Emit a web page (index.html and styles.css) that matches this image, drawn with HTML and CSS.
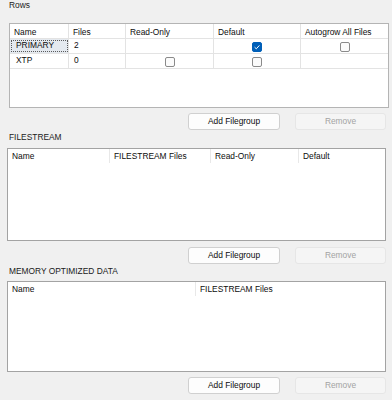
FILE: index.html
```html
<!DOCTYPE html>
<html lang="en">
<head>
  <meta charset="UTF-8">
  <title>Filegroups</title>
  <link rel="stylesheet" href="styles.css">
</head>
<body>
  <div class="page">
    <div class="group-label">Rows</div>
    <div class="rows-grid">
      <div class="grid-row head">
        <div class="cell">Name</div>
        <div class="cell">Files</div>
        <div class="cell">Read-Only</div>
        <div class="cell">Default</div>
        <div class="cell">Autogrow All Files</div>
      </div>
      <div class="grid-row">
        <div class="cell name focused">PRIMARY</div>
        <div class="cell">2</div>
        <div class="cell"></div>
        <div class="cell check"><span class="box checked"><svg viewBox="0 0 10 10" width="10" height="10"><path d="M2.6 5.2 L4.3 6.8 L7.4 3.4" fill="none" stroke="#fff" stroke-width="1"/></svg></span></div>
        <div class="cell check"><span class="box"></span></div>
      </div>
      <div class="grid-row">
        <div class="cell name">XTP</div>
        <div class="cell">0</div>
        <div class="cell check"><span class="box"></span></div>
        <div class="cell check"><span class="box"></span></div>
        <div class="cell"></div>
      </div>
    </div>
    <div class="buttons">
      <button class="btn">Add Filegroup</button>
      <button class="btn" disabled>Remove</button>
    </div>

    <div class="group-label">FILESTREAM</div>
    <div class="list-box">
      <div class="list-head fs-head">
        <div class="col">Name</div>
        <div class="col">FILESTREAM Files</div>
        <div class="col">Read-Only</div>
        <div class="col">Default</div>
      </div>
    </div>
    <div class="buttons">
      <button class="btn">Add Filegroup</button>
      <button class="btn" disabled>Remove</button>
    </div>

    <div class="group-label">MEMORY OPTIMIZED DATA</div>
    <div class="list-box mem">
      <div class="list-head mem-head">
        <div class="col">Name</div>
        <div class="col">FILESTREAM Files</div>
      </div>
    </div>
    <div class="buttons">
      <button class="btn">Add Filegroup</button>
      <button class="btn" disabled>Remove</button>
    </div>
  </div>
</body>
</html>
```

FILE: styles.css
```css
body {
  margin: 0;
  background-color: #f0f0f0;
  color: #0c0c0c;
  font-family: "Liberation Sans", Arial, sans-serif;
  font-size: 8.4px;
  overflow: hidden;
}

.page {
  display: flex;
  flex-direction: column;
}

.group-label {
  line-height: 11px;
  padding-left: 9px;
  color: #1a1a1a;
}

.group-label + .rows-grid {
  margin-top: 12px;
}

.rows-grid {
  margin-left: 9px;
  width: 380px;
  height: 85px;
  box-sizing: border-box;
  border: 1px solid #b4b4b4;
  background-color: #fff;
}

.grid-row {
  display: grid;
  grid-template-columns: 59px 57px 88px 87px 1fr;
  height: 15px;
  box-sizing: border-box;
  border-bottom: 1px solid #e3e3e3;
}

.cell {
  border-right: 1px solid #e3e3e3;
  line-height: 11px;
  padding: 1px 0 0 5px;
  white-space: nowrap;
}

.cell:last-child {
  border-right: none;
}

.grid-row.head .cell {
  padding: 3px 0 0 4px;
}

.cell.name {
  padding-left: 6px;
}

.cell.focused {
  background-color: #e4e9ef;
  outline: 1px dotted #5a5a5a;
  outline-offset: -2px;
}

.cell.check {
  display: flex;
  justify-content: center;
  align-items: center;
  padding: 1px 0 0 0;
}

.box {
  display: block;
  width: 10px;
  height: 10px;
  box-sizing: border-box;
  border: 1px solid #8a8a8a;
  border-radius: 2px;
  background-color: #fbfbfb;
}

.box.checked {
  border-color: #005fb8;
  background-color: #005fb8;
}

.box svg {
  display: block;
  margin: -1px;
}

.buttons {
  display: flex;
  gap: 15px;
  padding-left: 188px;
  margin-top: 5px;
}

.btn {
  width: 92px;
  height: 17px;
  padding: 0;
  border: 1px solid #d0d0d0;
  border-radius: 3px;
  background-color: #fdfdfd;
  color: #0c0c0c;
  font-family: inherit;
  font-size: 8.4px;
  line-height: 15px;
}

.btn:disabled {
  width: 91px;
  border-color: #e6e6e6;
  background-color: #f5f5f5;
  color: #a3a3a3;
}

.buttons + .group-label {
  margin-top: 2px;
}

.list-box {
  margin: 5px 0 0 7px;
  width: 379px;
  height: 93px;
  box-sizing: border-box;
  border: 1px solid #a3a3a3;
  background-color: #fff;
}

.list-box + .buttons {
  margin-top: 6px;
}

.list-box.mem {
  height: 91px;
  margin-top: 4px;
}

.list-box.mem + .buttons {
  margin-top: 5px;
}

.list-head {
  display: grid;
  height: 14px;
}

.fs-head {
  grid-template-columns: 102px 101px 88px 1fr;
}

.mem-head {
  grid-template-columns: 188px 1fr;
}

.col {
  border-right: 1px solid #e8e8e8;
  line-height: 11px;
  padding: 2px 0 0 4px;
  white-space: nowrap;
}

.col:last-child {
  border-right: none;
}
```
